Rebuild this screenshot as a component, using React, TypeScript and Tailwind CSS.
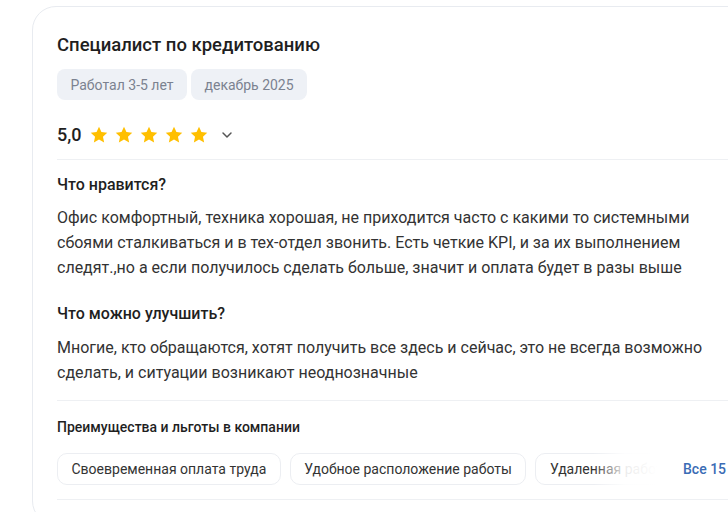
import { ChevronDown } from "lucide-react"

const benefits = [
  "Своевременная оплата труда",
  "Удобное расположение работы",
  "Удаленная работа",
  "Корпоративное обучение",
]

function Star() {
  return (
    <svg width="20" height="20" viewBox="0 0 20 20">
      <path
        d="M10 1.8l2.45 5.3 5.8.65-4.3 3.95 1.2 5.7L10 14.5l-5.15 2.9 1.2-5.7-4.3-3.95 5.8-.65z"
        fill="#ffbf00"
      />
    </svg>
  )
}

export default function App() {
  return (
    <div
      className="w-[728px] h-[512px] overflow-hidden bg-white"
      style={{ fontFamily: "Roboto, 'Noto Sans', sans-serif" }}
    >
      <div className="ml-8 mt-[6px] w-[780px] shrink-0 rounded-3xl border border-[#e8ebf0] px-6 pt-6 text-[#222]">
        <h2 className="text-[18.5px] leading-7 font-medium text-[#1f1f1f]">
          Специалист по кредитованию
        </h2>

        <div className="mt-2.5 flex gap-1">
          <span className="h-[31px] flex items-center px-[13.5px] rounded-lg bg-[#eef1f6] text-sm text-[#7b8290]">
            Работал 3-5 лет
          </span>
          <span className="h-[31px] flex items-center px-[13.5px] rounded-lg bg-[#eef1f6] text-sm text-[#7b8290]">
            декабрь 2025
          </span>
        </div>

        <div className="mt-[23px] flex items-center h-6">
          <span className="text-lg leading-6 font-medium text-[#1f1f1f]">5,0</span>
          <div className="ml-[7px] flex gap-[5px]">
            <Star />
            <Star />
            <Star />
            <Star />
            <Star />
          </div>
          <ChevronDown className="ml-[10px] text-[#555]" size={16} strokeWidth={2.2} />
        </div>

        <div className="mt-3 border-t border-[#eef0f3]" />

        <h3 className="mt-[13px] text-base leading-6 font-medium text-[#1f1f1f]">
          Что нравится?
        </h3>
        <p className="mt-2 max-w-[668px] text-base leading-[25px] text-[#333]">
          Офис комфортный, техника хорошая, не приходится часто с какими то системными сбоями
          сталкиваться и в тех-отдел звонить. Есть четкие KPI, и за их выполнением следят.,но а
          если получилось сделать больше, значит и оплата будет в разы выше
        </p>

        <h3 className="mt-[22px] text-base leading-6 font-medium text-[#1f1f1f]">
          Что можно улучшить?
        </h3>
        <p className="mt-[9px] max-w-[668px] text-base leading-[25px] text-[#333]">
          Многие, кто обращаются, хотят получить все здесь и сейчас, это не всегда возможно
          сделать, и ситуации возникают неоднозначные
        </p>

        <div className="mt-[15px] border-t border-[#eef0f3]" />

        <h4 className="mt-4 text-sm leading-5 font-medium text-[#1f1f1f]">
          Преимущества и льготы в компании
        </h4>

        <div className="mt-4 flex items-center">
          <div className="relative w-[600px] overflow-hidden">
            <div className="flex gap-[9px]">
              {benefits.map((b) => (
                <span
                  key={b}
                  className="shrink-0 h-8 flex items-center px-[13.5px] rounded-[10px] border border-[#eceef2] text-sm text-[#333]"
                >
                  {b}
                </span>
              ))}
            </div>
            <div className="absolute right-0 top-0 h-full w-[64px] bg-gradient-to-r from-transparent via-white/90 to-white" />
          </div>
          <a className="ml-[26px] text-sm font-medium text-[#3a6cb5]">Все 15</a>
        </div>

        <div className="mt-[14px] border-t border-[#eef0f3]" />
        <div className="h-6" />
      </div>
    </div>
  )
}
